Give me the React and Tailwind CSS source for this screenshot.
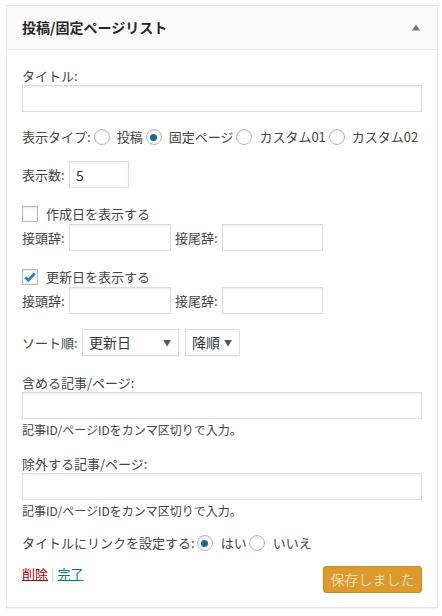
import React, { useState } from 'react'

const font = { fontFamily: '"Noto Sans CJK JP", "Noto Sans", sans-serif' }

function Radio({ checked, onClick }) {
  return (
    <span
      onClick={onClick}
      className="inline-flex w-4 h-4 shrink-0 items-center justify-center rounded-full border border-[#b4b9be] bg-white shadow-[inset_0_1px_2px_rgba(0,0,0,0.1)] cursor-pointer"
    >
      {checked && <span className="w-[7px] h-[7px] rounded-full bg-[#1a6a8e]" />}
    </span>
  )
}

function Checkbox({ checked, onClick }) {
  return (
    <span
      onClick={onClick}
      className="inline-flex w-4 h-4 shrink-0 items-center justify-center border border-[#b4b9be] bg-white shadow-[inset_0_1px_2px_rgba(0,0,0,0.1)] cursor-pointer"
    >
      {checked && (
        <svg width="14" height="14" viewBox="0 0 14 14">
          <path d="M2.2 7.2 L5.4 10.2 L11.8 3.2" fill="none" stroke="#1e8cbe" strokeWidth="2.8" />
        </svg>
      )}
    </span>
  )
}

function TextInput({ className = '', value, onChange }) {
  return (
    <input
      type="text"
      value={value}
      onChange={onChange}
      className={`h-[27px] border border-[#ddd] bg-white px-[6px] text-[13px] text-[#32373c] shadow-[inset_0_1px_2px_rgba(0,0,0,0.07)] outline-none ${className}`}
    />
  )
}

function Select({ label, className = '' }) {
  return (
    <div className={`h-[27px] flex items-center justify-between border border-[#ddd] bg-white pl-[6px] pr-[7px] text-[14px] text-[#32373c] shadow-[0_1px_1px_rgba(0,0,0,0.04)] ${className}`}>
      <span>{label}</span>
      <span className="text-[8px] text-[#555]">▼</span>
    </div>
  )
}

function DateBlock({ label, checked, onToggle }) {
  return (
    <>
      <div className="mt-[16px] h-[20px] flex items-center">
        <Checkbox checked={checked} onClick={onToggle} />
        <span className="ml-[8px]">{label}</span>
      </div>
      <div className="flex items-center h-[27px]">
        <span className="w-[47px]">接頭辞:</span>
        <TextInput className="w-[102px]" />
        <span className="ml-[4px] w-[47px]">接尾辞:</span>
        <TextInput className="w-[101px]" />
      </div>
    </>
  )
}

export default function App() {
  const [type, setType] = useState(1)
  const [count, setCount] = useState('5')
  const [created, setCreated] = useState(false)
  const [updated, setUpdated] = useState(true)
  const [link, setLink] = useState(true)

  const types = ['投稿', '固定ページ', 'カスタム01', 'カスタム02']

  return (
    <div className="min-h-screen bg-white pt-[5px] pl-[6px]" style={font}>
      <div className="w-[432px] border border-[#e5e5e5] bg-white shadow-[0_1px_1px_rgba(0,0,0,0.04)]">
        <div className="h-[44px] flex items-center justify-between bg-[#fafafa] border-b border-[#e5e5e5] pl-[15px] pr-[17px]">
          <h3 className="text-[14px] font-bold text-[#23282d]">投稿/固定ページリスト</h3>
          <svg width="8" height="7" viewBox="0 0 8 7">
            <path d="M0 6.5 L4 0.5 L8 6.5 Z" fill="#72777c" />
          </svg>
        </div>

        <div className="px-[15px] pt-[17px] pb-[14px] text-[13px] text-[#444]">
          <div className="h-[18px] leading-[18px]">タイトル:</div>
          <TextInput className="w-full" />

          <div className="mt-[13px] h-[24px] flex items-center whitespace-nowrap">
            <span>表示タイプ:</span>
            {types.map((t, i) => (
              <label key={t} className="flex items-center ml-[3px] cursor-pointer">
                <Radio checked={type === i} onClick={() => setType(i)} />
                <span className="ml-[7px]">{t}</span>
              </label>
            ))}
          </div>

          <div className="mt-[12px] flex items-center">
            <span className="w-[47px]">表示数:</span>
            <TextInput className="w-[60px] text-[14px]" value={count} onChange={(e) => setCount(e.target.value)} />
          </div>

          <DateBlock label="作成日を表示する" checked={created} onToggle={() => setCreated(!created)} />
          <DateBlock label="更新日を表示する" checked={updated} onToggle={() => setUpdated(!updated)} />

          <div className="mt-[15px] flex items-center">
            <span className="w-[60px]">ソート順:</span>
            <Select label="更新日" className="w-[97px]" />
            <Select label="降順" className="ml-[6px] w-[55px]" />
          </div>

          <div className="mt-[18px] h-[18px] leading-[18px]">含める記事/ページ:</div>
          <TextInput className="w-full" />
          <p className="mt-[1px] h-[20px] leading-[20px] text-[12px]">記事ID/ページIDをカンマ区切りで入力。</p>

          <div className="mt-[15px] h-[18px] leading-[18px]">除外する記事/ページ:</div>
          <TextInput className="w-full" />
          <p className="mt-[1px] h-[20px] leading-[20px] text-[12px]">記事ID/ページIDをカンマ区切りで入力。</p>

          <div className="mt-[10px] h-[24px] flex items-center whitespace-nowrap">
            <span>タイトルにリンクを設定する:</span>
            <label className="flex items-center ml-[2px] cursor-pointer">
              <Radio checked={link} onClick={() => setLink(true)} />
              <span className="ml-[8px]">はい</span>
            </label>
            <label className="flex items-center ml-[2px] cursor-pointer">
              <Radio checked={!link} onClick={() => setLink(false)} />
              <span className="ml-[8px]">いいえ</span>
            </label>
          </div>

          <div className="mt-[11px] flex items-start justify-between">
            <div className="leading-[16px] text-[13px]">
              <a href="#" className="text-[#a00] underline">削除</a>
              <span className="text-[#ccc] mx-[3px]">|</span>
              <a href="#" className="text-[#0073aa] underline">完了</a>
            </div>
            <button
              type="button"
              className="w-[99px] h-[27px] rounded-[3px] border border-[#c98b22] bg-[#dd9a2b] text-[14px] text-[#ecd9b8]"
            >
              保存しました
            </button>
          </div>
        </div>
      </div>
    </div>
  )
}
